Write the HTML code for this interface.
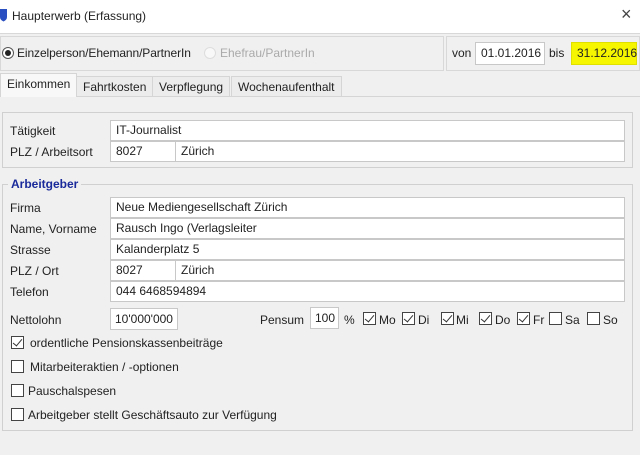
<!DOCTYPE html>
<html><head><meta charset="utf-8"><style>
*{box-sizing:border-box;margin:0;padding:0}
body{width:640px;height:455px;overflow:hidden;background:#f0f0f0;font-family:"Liberation Sans",sans-serif;font-size:12px;color:#222;position:relative}
.a{position:absolute;white-space:nowrap}
.in{position:absolute;background:#fff;border:1px solid #c8c8c8;height:21px;line-height:19px;padding-left:5px}
.cb{position:absolute;width:13px;height:13px;border:1px solid #444;background:#fff}
.cb.c::after{content:"";position:absolute;left:3px;top:0px;width:4px;height:8px;border:solid #333;border-width:0 1.5px 1.5px 0;transform:rotate(40deg)}
.box{position:absolute;border:1px solid #d0d0d0}
.tab{position:absolute;top:76px;height:20px;line-height:20px;border:1px solid #d5d5d5;border-bottom:none;background:#ececec;padding:0 6px}
</style></head><body>
<div class="a" style="left:0;top:0;width:640px;height:34px;background:#fff;border-bottom:1px solid #d8d8d8"></div>
<svg class="a" style="left:0;top:8px" width="8" height="14"><path d="M0 1h7v8q0 3-3.5 4.5Q0 12 0 9z" fill="#2a4fc0"/></svg>
<div class="a" style="left:12px;top:9px">Haupterwerb (Erfassung)</div>
<div class="a" style="left:621px;top:4px;font-size:18px;color:#444">×</div>

<div class="box" style="left:0;top:36px;width:444px;height:35px;border-color:#d8d8d8"></div>
<div class="box" style="left:446px;top:36px;width:194px;height:35px;border-color:#d8d8d8"></div>
<div class="a" style="left:2px;top:47px;width:12px;height:12px;border:1px solid #555;border-radius:50%;background:#fff"><div style="position:absolute;left:2px;top:2px;width:6px;height:6px;border-radius:50%;background:#222"></div></div>
<div class="a" style="left:17px;top:46px;letter-spacing:-0.1px">Einzelperson/Ehemann/PartnerIn</div>
<div class="a" style="left:204px;top:47px;width:12px;height:12px;border:1px solid #ddd;border-radius:50%;background:#f8f8f8"></div>
<div class="a" style="left:220px;top:46px;color:#aaa">Ehefrau/PartnerIn</div>
<div class="a" style="left:452px;top:46px">von</div>
<div class="in" style="left:475px;top:42px;width:70px;height:23px;line-height:21px">01.01.2016</div>
<div class="a" style="left:549px;top:46px">bis</div>
<div class="in" style="left:571px;top:42px;width:66px;height:23px;line-height:21px;background:#f6f600;border-color:#e0e000">31.12.2016</div>

<div class="a" style="left:0;top:96px;width:640px;height:1px;background:#d5d5d5"></div>
<div class="tab" style="left:0;top:73px;height:24px;background:#f8f8f8;border-bottom:none">Einkommen</div>
<div class="tab" style="left:76px">Fahrtkosten</div>
<div class="tab" style="left:152px">Verpflegung</div>
<div class="tab" style="left:231px">Wochenaufenthalt</div>

<div class="box" style="left:2px;top:112px;width:631px;height:56px"></div>
<div class="a" style="left:10px;top:124px">Tätigkeit</div>
<div class="in" style="left:110px;top:120px;width:515px">IT-Journalist</div>
<div class="a" style="left:10px;top:145px">PLZ / Arbeitsort</div>
<div class="in" style="left:110px;top:141px;width:66px">8027</div>
<div class="in" style="left:175px;top:141px;width:450px">Zürich</div>

<div class="box" style="left:2px;top:184px;width:631px;height:247px"></div>
<div class="a" style="left:8px;top:177px;padding:0 3px;background:#f0f0f0;color:#1a2a9a;font-weight:bold">Arbeitgeber</div>
<div class="a" style="left:10px;top:201px">Firma</div>
<div class="in" style="left:110px;top:197px;width:515px">Neue Mediengesellschaft Zürich</div>
<div class="a" style="left:10px;top:222px">Name, Vorname</div>
<div class="in" style="left:110px;top:218px;width:515px">Rausch Ingo (Verlagsleiter</div>
<div class="a" style="left:10px;top:243px">Strasse</div>
<div class="in" style="left:110px;top:239px;width:515px">Kalanderplatz 5</div>
<div class="a" style="left:10px;top:264px">PLZ / Ort</div>
<div class="in" style="left:110px;top:260px;width:66px">8027</div>
<div class="in" style="left:175px;top:260px;width:450px">Zürich</div>
<div class="a" style="left:10px;top:285px">Telefon</div>
<div class="in" style="left:110px;top:281px;width:515px">044 6468594894</div>

<div class="a" style="left:10px;top:313px">Nettolohn</div>
<div class="in" style="left:110px;top:308px;width:68px;height:22px;line-height:20px;text-align:center;padding:0">10'000'000</div>
<div class="a" style="left:260px;top:313px">Pensum</div>
<div class="in" style="left:310px;top:307px;width:29px;height:22px;line-height:20px;padding-left:4px">100</div>
<div class="a" style="left:344px;top:313px">%</div>
<div class="cb c" style="left:363px;top:312px"></div><div class="a" style="left:379px;top:313px">Mo</div>
<div class="cb c" style="left:402px;top:312px"></div><div class="a" style="left:418px;top:313px">Di</div>
<div class="cb c" style="left:441px;top:312px"></div><div class="a" style="left:456px;top:313px">Mi</div>
<div class="cb c" style="left:479px;top:312px"></div><div class="a" style="left:495px;top:313px">Do</div>
<div class="cb c" style="left:517px;top:312px"></div><div class="a" style="left:533px;top:313px">Fr</div>
<div class="cb" style="left:549px;top:312px"></div><div class="a" style="left:565px;top:313px">Sa</div>
<div class="cb" style="left:587px;top:312px"></div><div class="a" style="left:603px;top:313px">So</div>

<div class="cb c" style="left:11px;top:336px"></div><div class="a" style="left:30px;top:336px">ordentliche Pensionskassenbeiträge</div>
<div class="cb" style="left:11px;top:360px"></div><div class="a" style="left:30px;top:360px">Mitarbeiteraktien / -optionen</div>
<div class="cb" style="left:11px;top:384px"></div><div class="a" style="left:28px;top:384px">Pauschalspesen</div>
<div class="cb" style="left:11px;top:408px"></div><div class="a" style="left:28px;top:408px">Arbeitgeber stellt Geschäftsauto zur Verfügung</div>
</body></html>
